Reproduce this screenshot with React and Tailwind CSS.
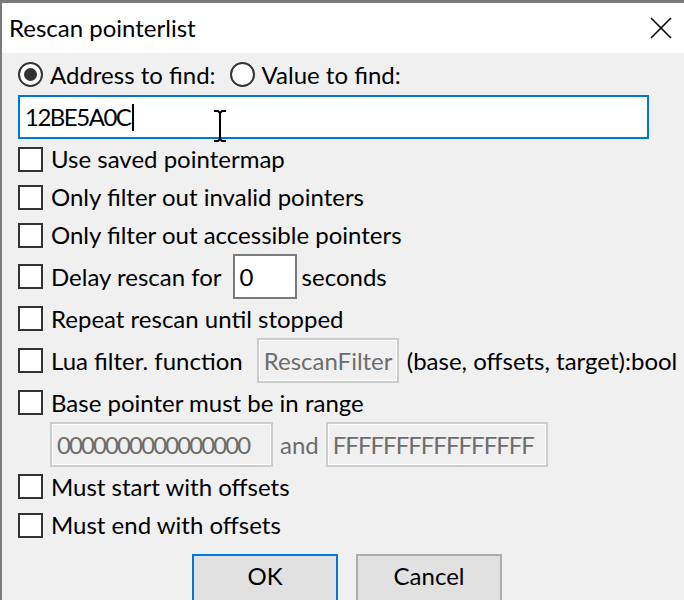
import React from "react";

const font = { fontFamily: "Lato, 'Noto Sans', sans-serif" };

function Check({ children }) {
  return (
    <div className="flex items-center gap-[8px]">
      <div className="w-[25px] h-[25px] border-2 border-[#333333] bg-white shrink-0" />
      {children && <span className="leading-none">{children}</span>}
    </div>
  );
}

function Radio({ checked, children }) {
  return (
    <div className="flex items-center gap-[7px]">
      <div className="w-[25px] h-[25px] rounded-full border-2 border-[#333333] bg-white flex items-center justify-center shrink-0">
        {checked && <div className="w-[13px] h-[13px] rounded-full bg-[#333333]" />}
      </div>
      <span className="leading-none">{children}</span>
    </div>
  );
}

function DisabledEdit({ w, track, children }) {
  return (
    <div
      className={`${w} h-[45px] border-2 border-[#cccccc] bg-[#f0f0f0] shadow-[inset_0_0_0_1px_#ffffff] flex items-center pl-[5px] text-[#6d6d6d] leading-none overflow-hidden whitespace-nowrap`}
    >
      <span className={track}>{children}</span>
    </div>
  );
}

export default function App() {
  return (
    <div
      className="w-[684px] h-[600px] overflow-hidden bg-[#f0f0f0] border-t-[3px] border-l-2 border-[#7a7a7a] text-[24px] text-black relative"
      style={font}
    >
      {/* Title bar */}
      <div className="h-[50px] bg-white flex items-center justify-between pl-[7px] pr-[12px]">
        <span className="leading-none">Rescan pointerlist</span>
        <svg width="22" height="22" viewBox="0 0 22 22">
          <path d="M1 1 L21 21 M21 1 L1 21" stroke="#000" strokeWidth="1.6" fill="none" />
        </svg>
      </div>

      {/* Content */}
      <div className="pl-[16px] pt-[9px] flex flex-col">
        <div className="h-[25px] flex items-center gap-[14px]">
          <Radio checked>Address to find:</Radio>
          <Radio>Value to find:</Radio>
        </div>

        <div className="mt-[8px] w-[631px] h-[44px] border-2 border-[#0078d7] bg-white flex items-center pl-[5px] relative">
          <span className="leading-none tracking-[-1.5px]">12BE5A0C</span>
          <span className="w-[2px] h-[27px] bg-black ml-[2px]" />
          <svg className="absolute left-[193px] top-[13px]" width="14" height="32" viewBox="0 0 14 32">
            <path d="M1 1 H5 L7 3 L9 1 H13 M7 3 V29 M1 31 H5 L7 29 L9 31 H13" stroke="#000" strokeWidth="2" fill="none" />
          </svg>
        </div>

        <div className="mt-[7px] h-[26px] flex items-center">
          <Check>Use saved pointermap</Check>
        </div>
        <div className="mt-[12px] h-[26px] flex items-center">
          <Check>Only filter out invalid pointers</Check>
        </div>
        <div className="mt-[12px] h-[26px] flex items-center">
          <Check>Only filter out accessible pointers</Check>
        </div>

        <div className="mt-[6px] h-[45px] flex items-center">
          <Check>Delay rescan for</Check>
          <div className="ml-[11px] w-[64px] h-[45px] border-2 border-[#7a7a7a] bg-white flex items-center pl-[5px] leading-none">
            0
          </div>
          <span className="ml-[5px] leading-none">seconds</span>
        </div>

        <div className="mt-[7px] h-[25px] flex items-center">
          <Check>Repeat rescan until stopped</Check>
        </div>

        <div className="mt-[7px] h-[45px] flex items-center">
          <Check>Lua filter. function</Check>
          <div className="ml-[14px]">
            <DisabledEdit w="w-[142px]">RescanFilter</DisabledEdit>
          </div>
          <span className="ml-[8px] leading-none whitespace-nowrap">(base, offsets, target):bool</span>
        </div>

        <div className="mt-[7px] h-[25px] flex items-center">
          <Check>Base pointer must be in range</Check>
        </div>

        <div className="mt-[7px] h-[45px] flex items-center pl-[32px]">
          <DisabledEdit w="w-[223px]" track="tracking-[-1.9px]">0000000000000000</DisabledEdit>
          <span className="mx-[7px] text-[#6d6d6d] leading-none">and</span>
          <DisabledEdit w="w-[222px]" track="tracking-[-1px]">FFFFFFFFFFFFFFFF</DisabledEdit>
        </div>

        <div className="mt-[7px] h-[25px] flex items-center">
          <Check>Must start with offsets</Check>
        </div>
        <div className="mt-[13px] h-[26px] flex items-center">
          <Check>Must end with offsets</Check>
        </div>

        <div className="mt-[16px] flex gap-[18px] pl-[174px]">
          <button className="w-[146px] h-[48px] border-2 border-[#0078d7] bg-[#e1e1e1] flex items-center justify-center leading-none pb-[4px]">
            OK
          </button>
          <button className="w-[146px] h-[48px] border-2 border-[#adadad] bg-[#e1e1e1] flex items-center justify-center leading-none pb-[4px]">
            Cancel
          </button>
        </div>
      </div>
    </div>
  );
}
